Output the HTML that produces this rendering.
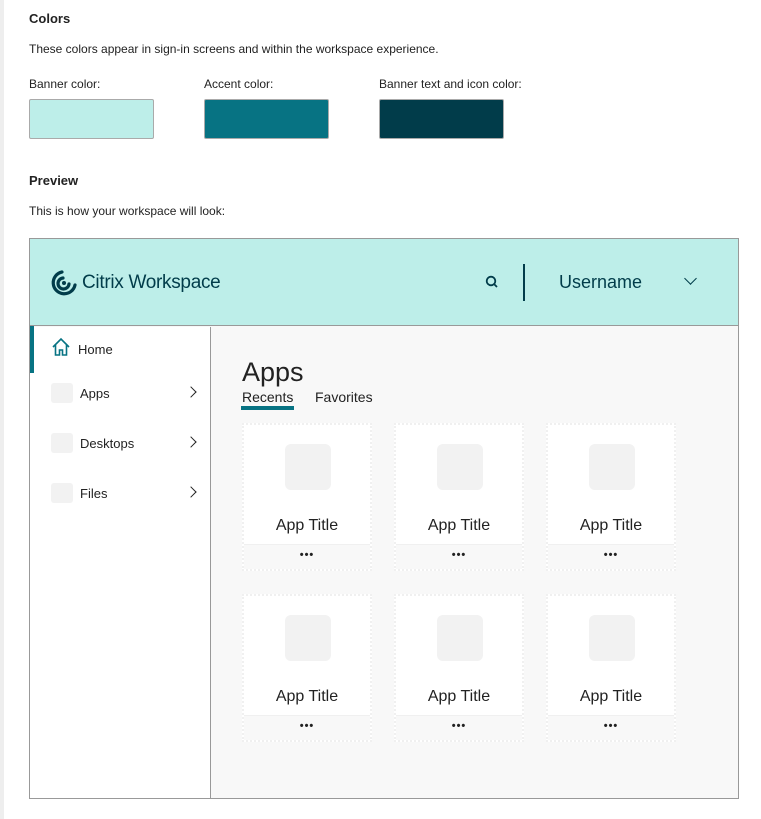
<!DOCTYPE html><html><head><style>
*{margin:0;padding:0;box-sizing:border-box}
body{width:761px;height:819px;background:#fff;font-family:"Liberation Sans",sans-serif;color:#222;position:relative;overflow:hidden}
.a{position:absolute}
.strip{left:0;top:0;width:4px;height:819px;background:#eee}
.sw{width:125px;height:40px;border:1px solid #aaa;border-radius:2px;top:99px}
.lbl{font-size:12px;top:77px}
.card{width:130px;height:148px;border:2px dotted #f0f0f0;background:#fff}
.card .ic{position:absolute;left:41px;top:19px;width:46px;height:46px;background:#f2f2f2;border-radius:6px}
.card .t{position:absolute;left:0;width:100%;top:92px;text-align:center;font-size:16px;color:#222}
.card .f{position:absolute;left:0;bottom:0;width:100%;height:25px;background:#f8f8f8;border-top:1px solid #f0f0f0;text-align:center;font-size:11px;font-weight:bold;line-height:20px;letter-spacing:1px}
.nav{left:50px;width:22px;height:20px;background:#f2f2f2;border-radius:3px}
.nt{left:79px;font-size:13px}
.chev{left:188px;width:8px;height:8px;border-right:1.5px solid #222;border-bottom:1.5px solid #222;transform:rotate(-45deg)}
</style></head><body>
<div class="a strip"></div>
<div class="a" style="left:29px;top:11px;font-size:13px;font-weight:bold">Colors</div>
<div class="a" style="left:29px;top:42px;font-size:12px">These colors appear in sign-in screens and within the workspace experience.</div>
<div class="a lbl" style="left:29px">Banner color:</div>
<div class="a lbl" style="left:204px">Accent color:</div>
<div class="a lbl" style="left:379px">Banner text and icon color:</div>
<div class="a sw" style="left:29px;background:#bdeee9"></div>
<div class="a sw" style="left:204px;background:#077383"></div>
<div class="a sw" style="left:379px;background:#013c4a"></div>
<div class="a" style="left:29px;top:173px;font-size:13px;font-weight:bold">Preview</div>
<div class="a" style="left:29px;top:204px;font-size:12px">This is how your workspace will look:</div>
<div class="a" style="left:29px;top:238px;width:710px;height:561px;border:1px solid #999;background:#f8f8f8;overflow:hidden">
 <div class="a" style="left:0;top:0;width:709px;height:87px;background:#bdeee9;border-bottom:1px solid #999"></div>
 <svg class="a" style="left:20px;top:30px" width="28" height="28" viewBox="0 0 28 28"><g fill="none" stroke="#013c4a" stroke-width="3.2" stroke-linecap="round"><path d="M12 3A11 11 0 1 0 25 16"/><path d="M13 9A5.5 5.5 0 1 0 19 15"/></g><circle cx="14" cy="14" r="2" fill="#013c4a"/></svg>
 <div class="a" style="left:52px;top:33px;font-size:19px;color:#013c4a;letter-spacing:-0.3px">Citrix Workspace</div>
 <svg class="a" style="left:455px;top:36px" width="14" height="14"><circle cx="6" cy="6" r="4.3" fill="none" stroke="#013c4a" stroke-width="1.8"/><path d="M9 9l3 3" stroke="#013c4a" stroke-width="1.8"/></svg>
 <div class="a" style="left:493px;top:25px;width:1.5px;height:37px;background:#013c4a"></div>
 <div class="a" style="left:529px;top:33px;font-size:18px;color:#013c4a">Username</div>
 <div class="a" style="left:656px;top:35px;width:9px;height:9px;border-right:1.5px solid #013c4a;border-bottom:1.5px solid #013c4a;transform:rotate(45deg)"></div>
 <div class="a" style="left:0;top:88px;width:181px;height:474px;background:#fff;border-right:1px solid #999"></div>
 <div class="a" style="left:0;top:87px;width:4px;height:47px;background:#077383"></div>
 <svg class="a" style="left:21px;top:98px" width="20" height="20" viewBox="0 0 20 20"><path d="M2 10L10 2l8 8M4.5 8v10h4v-5h3v5h4V8" fill="none" stroke="#077383" stroke-width="1.6"/></svg>
 <div class="a" style="left:48px;top:103px;font-size:13px">Home</div>
 <div class="a nav" style="left:21px;top:144px"></div><div class="a nt" style="left:50px;top:147px">Apps</div><div class="a chev" style="left:157px;top:149px"></div>
 <div class="a nav" style="left:21px;top:194px"></div><div class="a nt" style="left:50px;top:197px">Desktops</div><div class="a chev" style="left:157px;top:199px"></div>
 <div class="a nav" style="left:21px;top:244px"></div><div class="a nt" style="left:50px;top:247px">Files</div><div class="a chev" style="left:157px;top:249px"></div>
 <div class="a" style="left:212px;top:118px;font-size:27px">Apps</div>
 <div class="a" style="left:212px;top:150px;font-size:14px">Recents</div>
 <div class="a" style="left:211px;top:167px;width:53px;height:4px;background:#077383"></div>
 <div class="a" style="left:285px;top:150px;font-size:14px">Favorites</div>
 <div class="a card" style="left:212px;top:184px"><div class="ic"></div><div class="t">App Title</div><div class="f">•••</div></div>
 <div class="a card" style="left:364px;top:184px"><div class="ic"></div><div class="t">App Title</div><div class="f">•••</div></div>
 <div class="a card" style="left:516px;top:184px"><div class="ic"></div><div class="t">App Title</div><div class="f">•••</div></div>
 <div class="a card" style="left:212px;top:355px"><div class="ic"></div><div class="t">App Title</div><div class="f">•••</div></div>
 <div class="a card" style="left:364px;top:355px"><div class="ic"></div><div class="t">App Title</div><div class="f">•••</div></div>
 <div class="a card" style="left:516px;top:355px"><div class="ic"></div><div class="t">App Title</div><div class="f">•••</div></div>
</div>
</body></html>
